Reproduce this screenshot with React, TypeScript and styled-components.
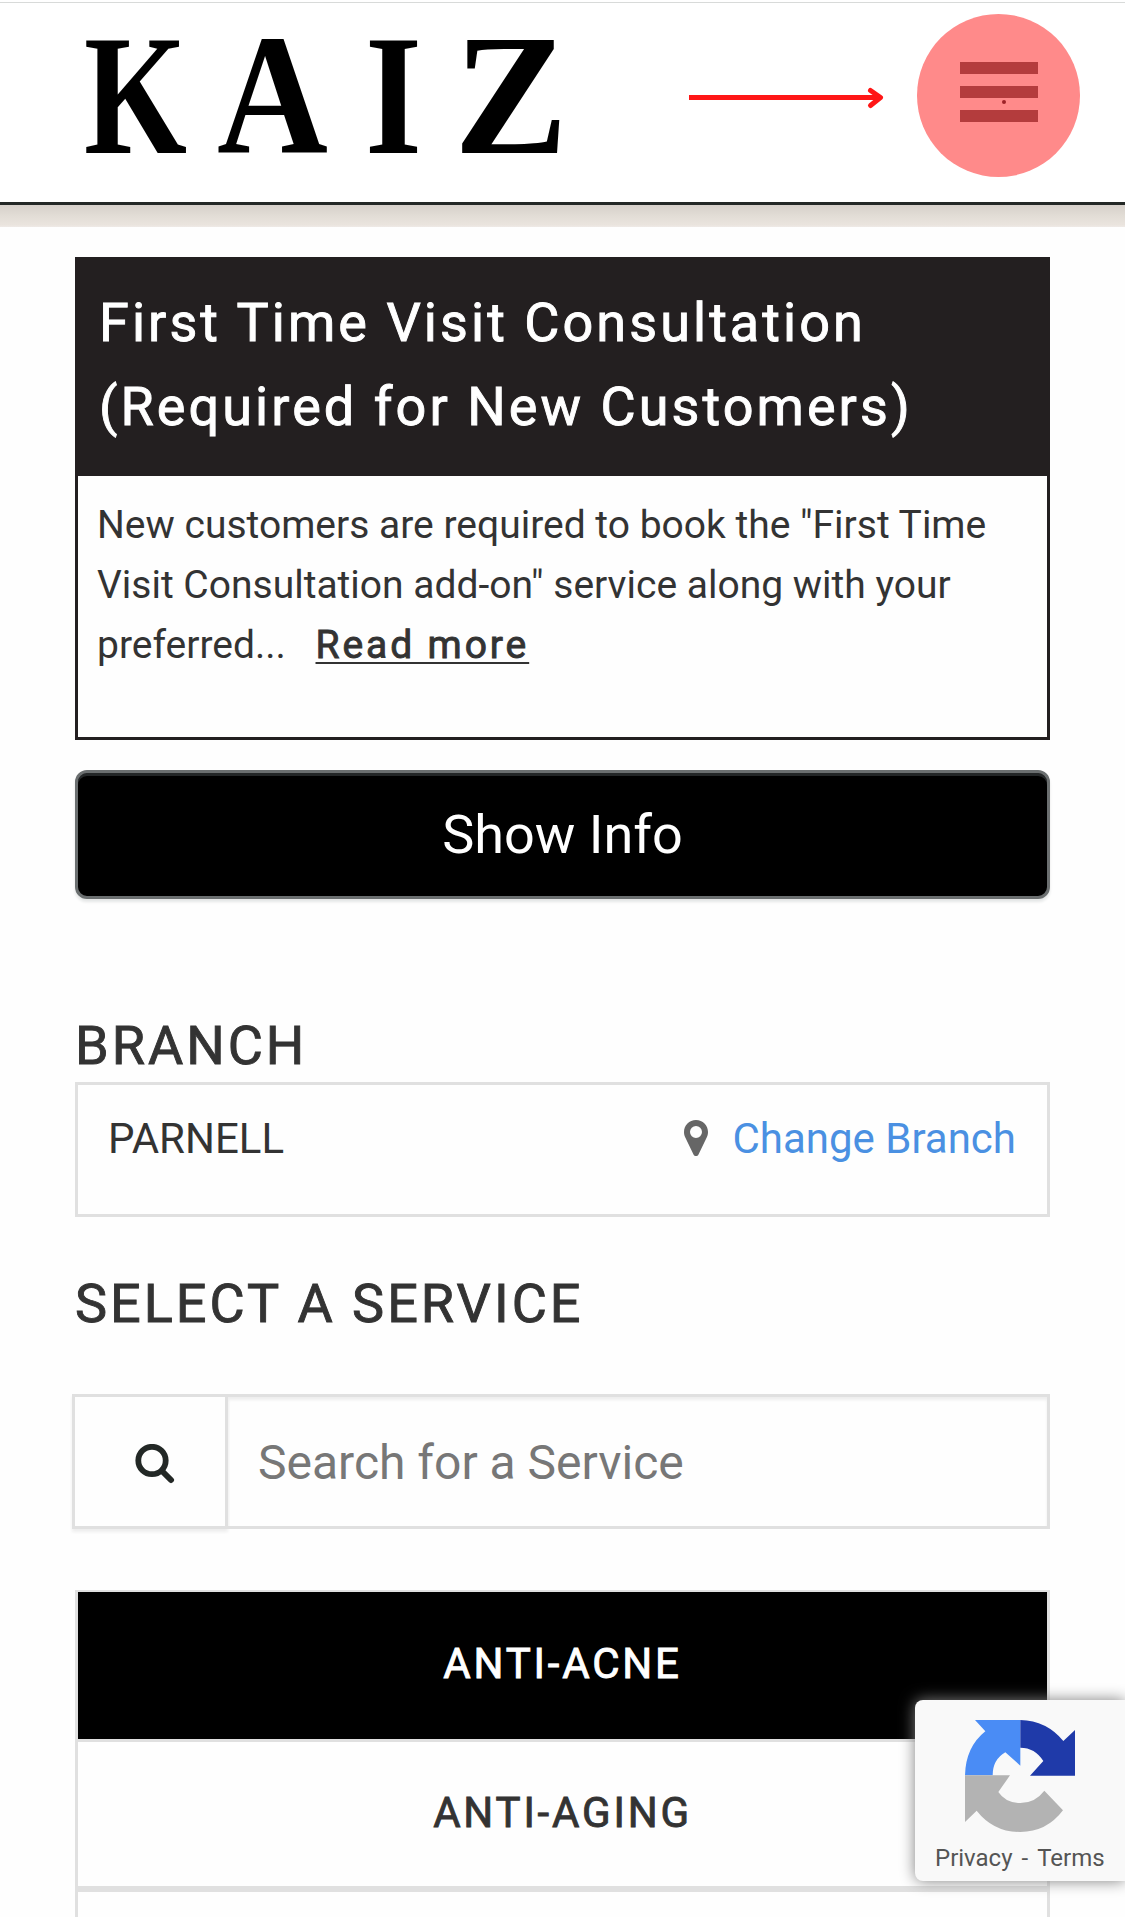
import React from "react";
import styled, { createGlobalStyle, css } from "styled-components";

const GlobalStyle = createGlobalStyle`
  *, *::before, *::after { box-sizing: border-box; }
  body {
    margin: 0;
    background: #fefefe;
    color: #333;
    font-family: Roboto, "Liberation Sans", sans-serif;
  }
  h2, h3, p, ul { margin: 0; padding: 0; font-weight: 400; }
  svg { display: block; flex: none; }
`;

const thickened = css`
  font-weight: 400;
  -webkit-text-stroke: 0.9px currentColor;
`;

const Page = styled.div`
  position: relative;
  width: 1125px;
  height: 1917px;
  overflow: hidden;
`;

const Header = styled.header`
  display: flex;
  align-items: flex-start;
  height: 205px;
  padding: 0 45px 0 80px;
  border-bottom: 3px solid #232826;
  background: linear-gradient(#fff 2px, #d8dad9 2px, #d8dad9 3px, #fff 3px);
`;

const Logo = styled.svg`
  overflow: visible;
  font-family: "Liberation Serif", serif;
  font-weight: 700;
`;

const Arrow = styled.svg`
  margin: 82px 0 0 109px;
`;

const MenuButton = styled.button`
  position: relative;
  display: flex;
  flex-direction: column;
  gap: 12px;
  width: 163px;
  height: 163px;
  margin: 14px 0 0 auto;
  padding: 48px 0 0 43px;
  border: 0;
  border-radius: 50%;
  background: #ff8a8a;
`;

const MenuBar = styled.span`
  width: 78px;
  height: 12px;
  background: #b43c3d;
`;

const TapPoint = styled.span`
  position: absolute;
  left: 85px;
  top: 86px;
  width: 4px;
  height: 4px;
  border-radius: 50%;
  background: #9c2228;
`;

const Band = styled.div`
  height: 22px;
  background: linear-gradient(#d6d0ca, #e2ddd6 50%, #eae4de 90%, #efeae6);
`;

const Content = styled.main`
  display: flex;
  flex-direction: column;
  padding: 30px 75px 0;
`;

const Notice = styled.section`
  height: 483px;
  border: 3px solid #231f20;
`;

const NoticeTitle = styled.h2`
  ${thickened}
  height: 216px;
  padding: 21px 21px 0;
  background: #231f20;
  color: #fff;
  font-size: 54px;
  line-height: 84px;
  letter-spacing: 3.05px;
`;

const NoticeText = styled.p`
  padding: 19px 19px 0;
  font-size: 39px;
  line-height: 60px;
  white-space: nowrap;
`;

const ReadMore = styled.a`
  ${thickened}
  margin-left: 20px;
  letter-spacing: 2.9px;
  text-decoration: underline;
  text-decoration-thickness: 2px;
  text-underline-offset: 4px;
`;

const InfoButton = styled.button`
  height: 129px;
  margin-top: 30px;
  border: 3px solid #6b6f70;
  border-radius: 12px;
  background: #000;
  box-shadow: inset 0 3px 0 #232627, 0 3px 3px #e4e6e6;
  color: #fff;
  font: 400 54px/60px Roboto, sans-serif;
`;

const SectionTitle = styled.h3<{ $top: number }>`
  ${thickened}
  margin-top: ${(p) => p.$top}px;
  font-size: 54px;
  line-height: 60px;
  letter-spacing: 3px;
`;

const BranchBox = styled.div`
  display: flex;
  align-items: flex-start;
  height: 135px;
  margin-top: 6px;
  padding: 24px 31px 0 30px;
  border: 3px solid #e0e0e0;
  font-size: 42px;
  line-height: 60px;
`;

const BranchLink = styled.a`
  display: flex;
  gap: 24px;
  margin-left: auto;
  color: #4a90e2;
`;

const PinIcon = styled.svg`
  margin-top: 11px;
`;

const SearchBar = styled.div`
  display: flex;
  height: 135px;
  margin: 60px 0 0 -3px;
`;

const SearchIconBox = styled.div`
  display: flex;
  align-items: center;
  width: 156px;
  padding: 5px 0 0 60px;
  border: 3px solid #e0e0e0;
  box-shadow: 0 3px 3px #eee;
`;

const SearchInput = styled.input`
  flex: 1;
  min-width: 0;
  padding: 2px 30px 0;
  border: 3px solid #e0e0e0;
  border-left: 0;
  background: transparent;
  box-shadow: inset 0 3px 3px #eee;
  font: 400 48px/60px Roboto, sans-serif;
  &::placeholder { color: #777; opacity: 1; }
`;

const ServiceList = styled.ul`
  margin-top: 61px;
  border: solid #e0e0e0;
  border-width: 2px 3px;
  list-style: none;
`;

const ServiceItem = styled.li<{ $active?: boolean }>`
  ${thickened}
  display: flex;
  align-items: center;
  justify-content: center;
  height: 150px;
  padding-bottom: ${(p) => (p.$active ? 5 : 3)}px;
  border-bottom: ${(p) => (p.$active ? 3 : 6)}px solid #e0e0e0;
  background: ${(p) => (p.$active ? "#000" : "#fefefe")};
  color: ${(p) => (p.$active ? "#fff" : "#333")};
  font-size: 42px;
  letter-spacing: 2.8px;
`;

const CaptchaBadge = styled.aside`
  position: absolute;
  right: 0;
  top: 1700px;
  display: flex;
  flex-direction: column;
  width: 210px;
  height: 181px;
  padding: 19px 0 0 20px;
  border-radius: 8px 0 0 8px;
  background: #f9f9f9;
  box-shadow: 0 0 15px #808080;
`;

const CaptchaLogo = styled.svg`
  margin-left: 29px;
`;

const CaptchaLinks = styled.div`
  display: flex;
  gap: 9px;
  margin-top: 11px;
  color: #555;
  font-size: 24px;
  line-height: 28px;
`;

export default function App() {
  return (
    <>
      <GlobalStyle />
      <Page>
        <Header>
          <Logo width="500" height="200" viewBox="80 0 500 200" aria-label="KAIZ">
            <text x="84" y="153" fontSize="171" textLength="103" lengthAdjust="spacingAndGlyphs">K</text>
            <text x="217" y="153" fontSize="171" textLength="111" lengthAdjust="spacingAndGlyphs">A</text>
            <text x="365" y="153" fontSize="171" textLength="57" lengthAdjust="spacingAndGlyphs">I</text>
            <text x="454" y="153" fontSize="171" textLength="114" lengthAdjust="spacingAndGlyphs">Z</text>
          </Logo>
          <Arrow width="195" height="30" viewBox="0 0 195 30" fill="none" stroke="#ff1616" strokeWidth="5">
            <path d="M0 15.5H192" />
            <path d="M181.5 8.500L191.500 15.500L181.500 23.500" strokeLinecap="round" strokeLinejoin="round" />
          </Arrow>
          <MenuButton aria-label="Menu">
            <MenuBar />
            <MenuBar />
            <MenuBar />
            <TapPoint />
          </MenuButton>
        </Header>
        <Band />
        <Content>
          <Notice>
            <NoticeTitle>
              First Time Visit Consultation
              <br />
              (Required for New Customers)
            </NoticeTitle>
            <NoticeText>
              New customers are required to book the "First Time
              <br />
              Visit Consultation add-on" service along with your
              <br />
              preferred... <ReadMore>Read more</ReadMore>
            </NoticeText>
          </Notice>
          <InfoButton>Show Info</InfoButton>
          <SectionTitle $top={117}>BRANCH</SectionTitle>
          <BranchBox>
            <span>PARNELL</span>
            <BranchLink>
              <PinIcon width="24" height="36" viewBox="0 0 24 36">
                <path
                  fill="#666"
                  fillRule="evenodd"
                  d="M12 0C5.2 0 0 5.3 0 12c0 2.2.5 3.8 1.3 5.5l8.2 17c1 2 4 2 5 0l8.2-17C23.5 15.8 24 14.2 24 12 24 5.3 18.8 0 12 0zm0 6a6 6 0 1 1 0 12 6 6 0 0 1 0-12z"
                />
              </PinIcon>
              Change Branch
            </BranchLink>
          </BranchBox>
          <SectionTitle $top={57}>SELECT A SERVICE</SectionTitle>
          <SearchBar>
            <SearchIconBox>
              <svg width="40" height="40" viewBox="0 0 40 40" fill="none" stroke="#232826">
                <circle cx="17" cy="16.5" r="13.7" strokeWidth="5.8" />
                <path d="M27 27L36 36" strokeWidth="6" strokeLinecap="round" />
              </svg>
            </SearchIconBox>
            <SearchInput placeholder="Search for a Service" />
          </SearchBar>
          <ServiceList>
            <ServiceItem $active>ANTI-ACNE</ServiceItem>
            <ServiceItem>ANTI-AGING</ServiceItem>
            <ServiceItem />
          </ServiceList>
        </Content>
        <CaptchaBadge>
          <CaptchaLogo width="112" height="114" viewBox="252 178 336 342">
            <path fill="#4a8cf5" d="M285 181H421V318L376 278Q338 300 338 347H255Q257 262 316 215Z" />
            <path fill="#1f3aa9" d="M421 181Q500 183 550 244L585 211V348H450L490 304Q465 264 421 264Z" />
            <path fill="#b3b3b3" d="M255 347H390L355 397Q377 430 421 430Q465 430 493 393L549 452Q500 517 421 517Q340 517 290 453L255 487Z" />
          </CaptchaLogo>
          <CaptchaLinks>
            <span>Privacy</span>
            <span>-</span>
            <span>Terms</span>
          </CaptchaLinks>
        </CaptchaBadge>
      </Page>
    </>
  );
}
